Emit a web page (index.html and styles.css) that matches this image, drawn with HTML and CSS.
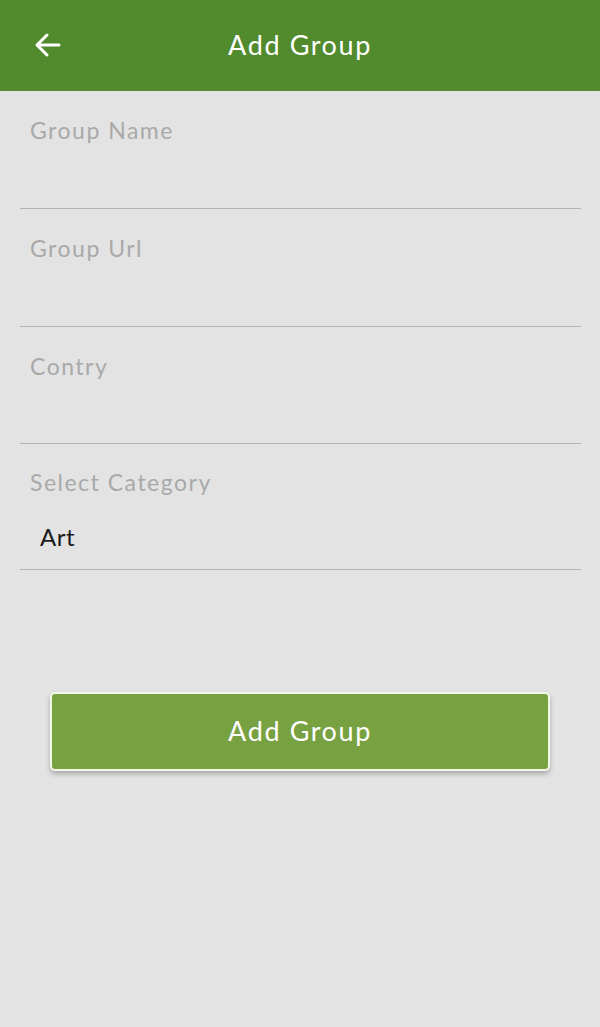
FILE: index.html
```html
<!DOCTYPE html>
<html>
<head>
<meta charset="utf-8">
<link rel="stylesheet" href="styles.css">
</head>
<body>
<header class="appbar">
  <svg class="back" width="30" height="30" viewBox="0 0 30 30"><path d="M27 15H5M15 5L5 15l10 10" fill="none" stroke="#fff" stroke-width="3" stroke-linecap="round" stroke-linejoin="round"/></svg>
  <h1 class="title">Add Group</h1>
</header>
<main class="form">
  <div class="field"><div class="label">Group Name</div></div>
  <div class="field"><div class="label">Group Url</div></div>
  <div class="field"><div class="label">Contry</div></div>
  <div class="field select"><div class="label">Select Category</div><div class="value">Art</div></div>
  <div class="actions"><button class="btn">Add Group</button></div>
</main>
</body>
</html>
```
FILE: styles.css
```css
html, body { margin: 0; padding: 0; }
body { background: #e3e3e3; font-family: Lato, "Open Sans", sans-serif; width: 600px; height: 1027px; overflow: hidden; }
.appbar { height: 91px; background: #518b2e; display: flex; align-items: center; justify-content: center; position: relative; }
.back { position: absolute; left: 32px; top: 30px; }
.title { margin: 0 0 2px; color: #fff; font-weight: 400; font-size: 27px; letter-spacing: 1.6px; }
.form { display: flex; flex-direction: column; }
.field { padding: 26px 10px 0; margin: 0 19px 0 20px; border-bottom: 1px solid #b4b4b4; box-sizing: border-box; height: 118px; }
.field:nth-child(3) { height: 117px; }
.label { font-size: 23px; line-height: 26px; color: #a9a9a9; letter-spacing: 1.5px; }
.field.select { height: auto; padding: 25px 10px 18px; }
.value { margin-top: 28px; padding-left: 10px; font-size: 24px; line-height: 28px; color: #1a1a1a; letter-spacing: 0.5px; }
.actions { display: flex; justify-content: center; margin-top: 122px; }
.btn { width: 500px; height: 79px; background: #78a142; border: 2px solid #f2f7ea; border-radius: 5px; color: #fff; font-family: inherit; font-size: 27px; letter-spacing: 1.6px; padding-bottom: 3px; box-shadow: 0 3px 5px rgba(0,0,0,0.25); }
```
